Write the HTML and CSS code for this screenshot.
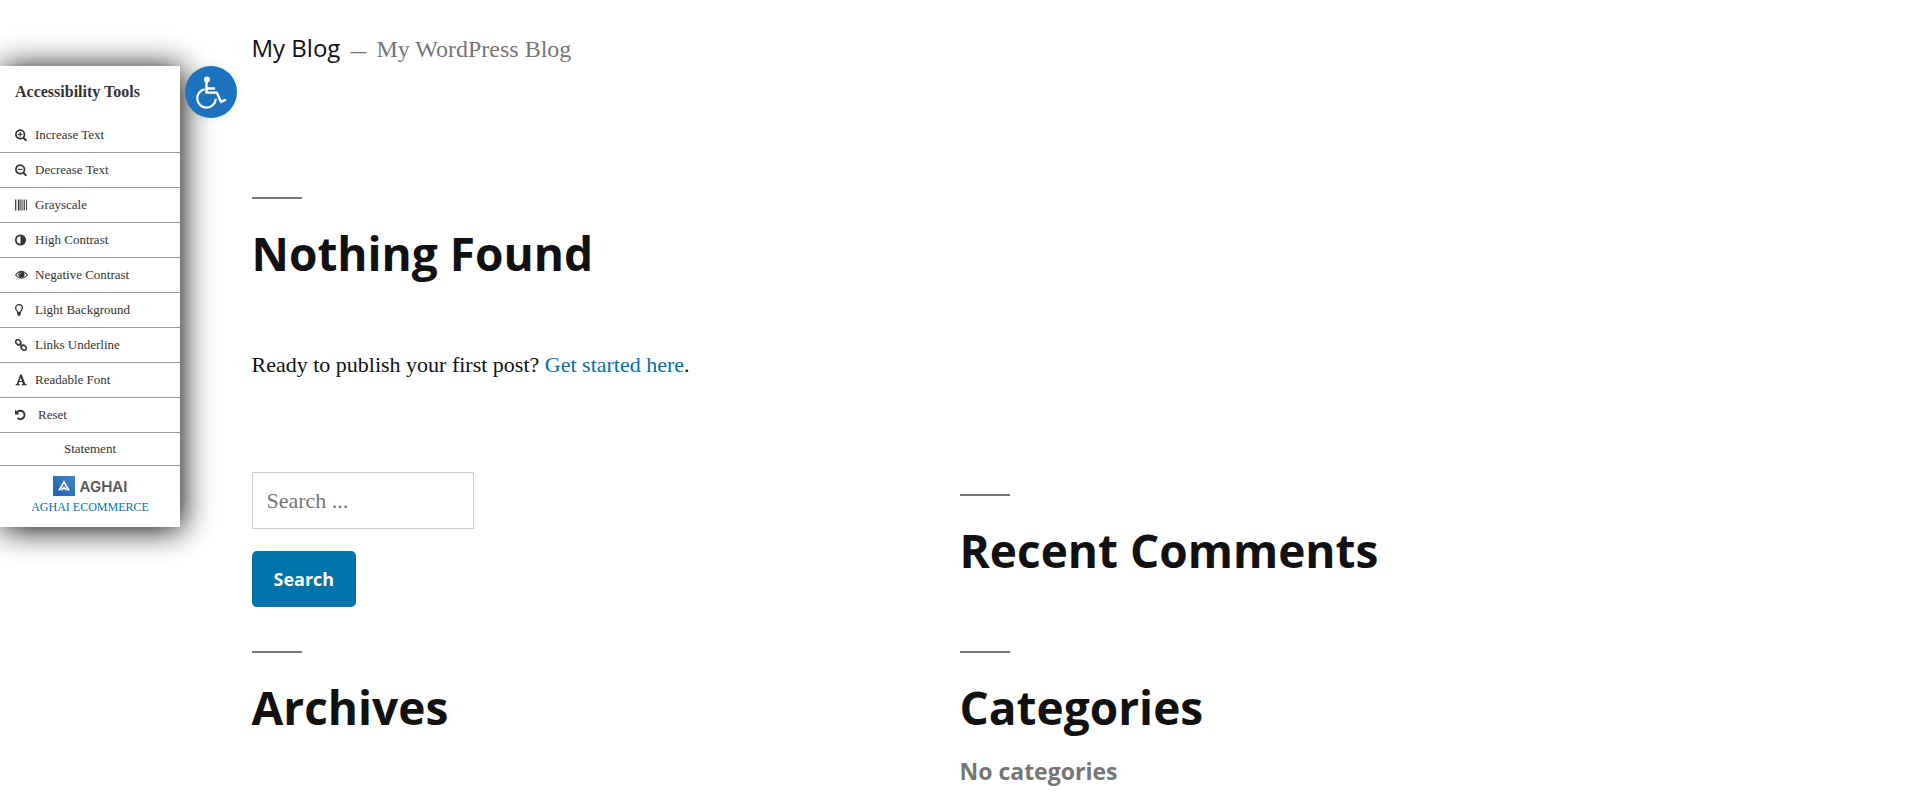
FILE: index.html
```html
<!DOCTYPE html>
<html lang="en">
<head>
<meta charset="utf-8">
<title>My Blog</title>
<link rel="stylesheet" href="styles.css">
</head>
<body>
<aside class="tools" aria-label="Accessibility Tools">
  <button class="tools-toggle" type="button" aria-label="Toggle accessibility tools">
    <svg viewBox="0 0 52 52" fill="none" stroke="#fff" stroke-width="2">
      <circle cx="22" cy="13.500" r="3" fill="#fff" stroke="none"/>
      <path d="M21.500 14v12.600h10.300l4.200 9.200 5-2.200M22 22.500h8" stroke-width="2.400"/>
      <path d="M19.500 23.200a9.300 9.300 0 1 0 11.300 9.700" stroke-width="2.200"/>
    </svg>
  </button>
  <h2 class="tools-title">Accessibility Tools</h2>
  <ul class="tools-list">
    <li><a class="tool" href="#"><svg class="icon" viewBox="0 0 12 12"><circle cx="5.200" cy="5.400" r="4.300" fill="none" stroke="currentColor" stroke-width="1.700"/><path d="M8.200 8.600l3.200 3.100" stroke="currentColor" stroke-width="2"/><path d="M5.200 3v4.800M3 5.400h4.400" stroke="currentColor" stroke-width="1.200"/></svg>Increase Text</a></li>
    <li><a class="tool" href="#"><svg class="icon" viewBox="0 0 12 12"><circle cx="5.200" cy="5.400" r="4.300" fill="none" stroke="currentColor" stroke-width="1.700"/><path d="M8.200 8.600l3.200 3.100" stroke="currentColor" stroke-width="2"/><path d="M3 5.400h4.400" stroke="currentColor" stroke-width="1.200"/></svg>Decrease Text</a></li>
    <li><a class="tool" href="#"><svg class="icon" viewBox="0 0 12 12"><path d="M0 .5h.9v11H0zM1.700.5h.4v11h-.4zM3 .5h1v11H3zM4.500.5h.6v11h-.6zM5.500.5h.9v11h-.9zM6.900.5h.6v11h-.6zM8 .5h.4v11H8zM9.200.5h.8v11h-.8zM11.100.5h.9v11h-.9z"/></svg>Grayscale</a></li>
    <li><a class="tool" href="#"><svg class="icon" viewBox="0 0 12 12"><circle cx="5.500" cy="6" r="4.700" fill="none" stroke="currentColor" stroke-width="1.700"/><path d="M5.500 1.500a4.500 4.500 0 0 1 0 9z"/></svg>High Contrast</a></li>
    <li><a class="tool" href="#"><svg class="icon icon-wide" viewBox="0 0 13 12"><path d="M.6 6Q6.500-1.400 12.400 6 6.500 12.600.6 6z" fill="none" stroke="currentColor" stroke-width="1.100"/><circle cx="6.500" cy="5.600" r="3.100"/><path d="M4.700 5.600q0-1.700 1.700-1.700" fill="none" stroke="#fff" stroke-width=".6"/></svg>Negative Contrast</a></li>
    <li><a class="tool" href="#"><svg class="icon" viewBox="0 0 12 12"><path d="M2.700 8.300C2.600 6.700.6 6.200.6 4a3.400 3.400 0 0 1 6.800 0c0 2.200-2 2.700-2.100 4.300z" fill="none" stroke="currentColor" stroke-width="1.200"/><path d="M2.300 8.300h3.400v2.400l-.9 1H3.200l-.9-1zM4 2.200q1.600.1 1.700 1.600h-.5Q5 2.700 4 2.600z"/></svg>Light Background</a></li>
    <li><a class="tool" href="#"><svg class="icon" viewBox="0 0 12 12"><g transform="rotate(45 6 6)" fill="none" stroke="currentColor" stroke-width="1.500"><rect x="-.6" y="3.900" width="5.600" height="4.200" rx="2"/><rect x="7" y="3.900" width="5.600" height="4.200" rx="2"/><path d="M3.800 6h4.400"/></g></svg>Links Underline</a></li>
    <li><a class="tool" href="#"><svg class="icon" viewBox="0 0 12 12"><path d="M5.200.6h1.500l3.600 9.300 1.400.4v1H6.600v-1l1.300-.4-.6-1.800H4.100l-.6 1.800 1.400.4v1H.6v-1l1.100-.4zM4.500 7h2.400L5.700 3.500z" fill-rule="evenodd"/></svg>Readable Font</a></li>
    <li><a class="tool tool-reset" href="#"><svg class="icon" viewBox="0 0 12 12"><path d="M0 .8v4.700h4.700z"/><path d="M1.800 3.600A4.200 4.200 0 1 1 2.500 9" fill="none" stroke="currentColor" stroke-width="1.900"/></svg>Reset</a></li>
    <li><a class="tool tool-statement" href="#">Statement</a></li>
  </ul>
  <div class="credit">
    <div class="credit-logo">
      <svg class="credit-mark" viewBox="0 0 22 20" aria-hidden="true">
        <defs><linearGradient id="mark" x1="0" y1="1" x2="1" y2="0"><stop offset="0" stop-color="#215fae"/><stop offset="1" stop-color="#3f86ca"/></linearGradient></defs>
        <rect width="22" height="20" fill="url(#mark)"/>
        <path d="M6 14.500l5-8.500 5 8.500M8.300 14.200l2.700-2.500 2.700 2.500" fill="none" stroke="#fff" stroke-width="1.700"/>
      </svg>
      <span class="credit-name">AGHAI</span>
    </div>
    <a class="link" href="#">AGHAI ECOMMERCE</a>
  </div>
</aside>

<div class="page">
  <header class="site-header">
    <a class="site-title" href="#">My Blog</a>
    <span class="dash">—</span>
    <p class="site-description">My WordPress Blog</p>
  </header>
  <main class="content">
    <h1 class="heading">Nothing Found</h1>
    <p class="intro">Ready to publish your first post? <a class="link" href="#">Get started here</a>.</p>
  </main>
  <footer class="widgets">
    <form class="search" role="search">
      <input class="search-field" type="search" placeholder="Search ..." aria-label="Search for">
      <button class="search-submit" type="button">Search</button>
    </form>
    <section class="widget"><h2 class="heading">Recent Comments</h2></section>
    <section class="widget"><h2 class="heading">Archives</h2></section>
    <section class="widget">
      <h2 class="heading">Categories</h2>
      <p class="empty">No categories</p>
    </section>
  </footer>
</div>
</body>
</html>
```
FILE: styles.css
```css
* { box-sizing: border-box; }

body {
  margin: 0;
  background: #fff;
  color: #111;
  font-family: "Liberation Serif", serif;
  font-size: 22px;
  overflow: hidden;
}

h1, h2, p, ul { margin: 0; padding: 0; }
ul { list-style: none; }
a { text-decoration: none; color: inherit; }
.link { color: #0073aa; }

.page { padding: 32px calc(10% + 60px) 0; }

.site-header {
  display: flex;
  align-items: baseline;
  gap: 10px;
  line-height: 32px;
  color: #767676;
}
.site-title {
  color: #111;
  font-family: "Open Sans", sans-serif;
  font-size: 24px;
  font-weight: 400;
}
.dash { font-size: 16px; font-weight: 700; }
.site-description { font-size: 24px; }

.content { padding-top: 129px; }

.heading {
  font-family: "Open Sans", sans-serif;
  font-size: 46px;
  font-weight: 700;
  line-height: 60px;
}
.heading::before {
  content: "";
  display: block;
  width: 50px;
  height: 2px;
  margin-bottom: 24px;
  background: #767676;
}

.intro {
  margin-top: 62px;
  line-height: 40px;
}

.widgets {
  display: grid;
  grid-template-columns: 1fr 1fr;
  column-gap: 4px;
  margin-top: 87px;
}
.search {
  display: flex;
  flex-direction: column;
  align-items: flex-start;
  gap: 22px;
  padding-bottom: 22px;
}
.search-field {
  width: 222px;
  padding: 8px 14px;
  border: 1px solid #ccc;
  background: #fff;
  color: #111;
  font: 22px/39px "Liberation Serif", serif;
}
.search-field::placeholder { color: #767676; opacity: 1; }
.search-submit {
  padding: 17px 22px;
  border: 0;
  border-radius: 5px;
  background: #0073aa;
  color: #fff;
  font: 700 18px/22px "Open Sans", sans-serif;
}
.widget { padding-top: 22px; }
.empty {
  margin-top: 16px;
  color: #767676;
  font: 700 23px/36px "Open Sans", sans-serif;
}

.tools {
  position: absolute;
  top: 66px;
  left: 0;
  width: 180px;
  background: #fff;
  box-shadow: 2px 2px 30px #000;
  color: #333;
  font-size: 13px;
}
.tools-toggle {
  position: absolute;
  top: 0;
  left: 185px;
  width: 52px;
  height: 52px;
  padding: 0;
  border: 0;
  border-radius: 50%;
  background: #1e73be;
  box-shadow: 0 0 8px rgba(0, 0, 0, 0.1);
}
.tools-toggle svg { display: block; }
.tools-title {
  padding: 16px 15px;
  font-size: 16px;
  line-height: 20px;
}
.tool {
  display: flex;
  align-items: center;
  gap: 8px;
  padding: 6px 15px;
  border-bottom: 1px solid #999;
  line-height: 22px;
}
.tool-reset { gap: 11px; }
.tool-statement {
  justify-content: center;
  padding: 5px 0;
}
.icon {
  width: 12px;
  height: 12px;
  fill: currentColor;
}
.icon-wide {
  width: 13px;
  margin-right: -1px;
}
.credit {
  display: flex;
  flex-direction: column;
  align-items: center;
  padding: 10px 0 9px;
  font-size: 12px;
  line-height: 22px;
}
.credit-logo {
  display: flex;
  gap: 5px;
  line-height: 20px;
}
.credit-mark {
  width: 22px;
  height: 20px;
}
.credit-name {
  color: #555;
  font: 600 15px/22px "Inter", sans-serif;
  height: 20px;
}
```
